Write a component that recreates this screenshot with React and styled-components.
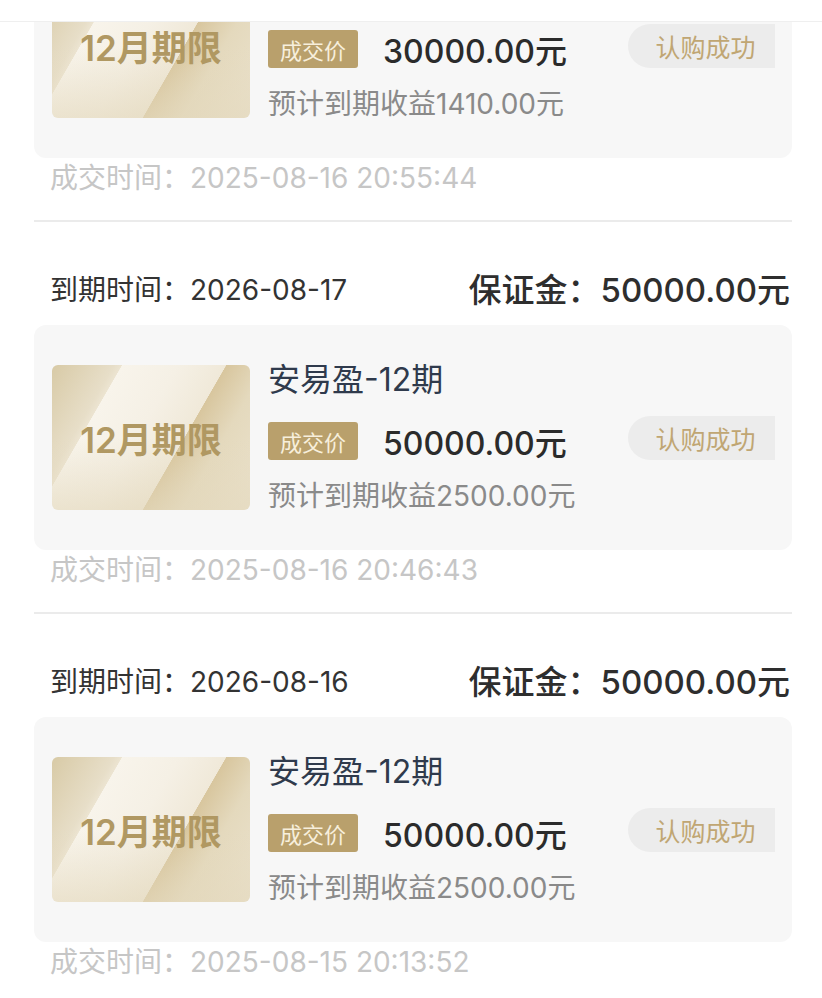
import React from "react";
import styled, { createGlobalStyle } from "styled-components";

const Global = createGlobalStyle`
  html, body { margin: 0; padding: 0; background: #fff; }
  body { font-family: Inter, "Noto Sans CJK SC", sans-serif; }
  * { box-sizing: border-box; }
`;

const Screen = styled.div`
  width: 822px;
  height: 998px;
  overflow: hidden;
  display: flex;
  flex-direction: column;
  background: #fff;
`;

const TopBar = styled.div`
  height: 22px;
  flex: none;
  background: #fff;
  border-bottom: 1px solid #efefef;
  position: relative;
  z-index: 2;
`;

const Viewport = styled.div`
  flex: 1;
  overflow: hidden;
`;

const List = styled.div`
  margin-top: -192px;
  padding: 0 30px 0 34px;
  display: flex;
  flex-direction: column;
`;

const Section = styled.section`
  display: flex;
  flex-direction: column;
  border-bottom: 2px solid #ebebeb;
`;

const HeaderRow = styled.div`
  height: 44px;
  margin: 44px 0 15px;
  padding: 0 2px 0 16px;
  display: flex;
  align-items: center;
  justify-content: space-between;
`;

const Expire = styled.div`
  font-size: 28px;
  color: #333;
`;

const Deposit = styled.div`
  font-size: 33px;
  font-weight: 500;
  color: #2e2e2e;
`;

const Card = styled.div`
  height: 225px;
  border-radius: 12px;
  background: #f7f7f7;
  padding: 40px 17px 40px 18px;
  display: flex;
  align-items: center;
`;

const Thumb = styled.div`
  width: 198px;
  height: 145px;
  flex: none;
  border-radius: 6px;
  display: flex;
  align-items: center;
  justify-content: center;
  font-size: 35px;
  font-weight: 600;
  color: #b09862;
  background:
    linear-gradient(180deg, rgba(255,255,255,0) 50%, rgba(227,216,188,0.6) 100%),
    linear-gradient(120deg,
      #d8caa6 0%,
      #e7dec8 22%,
      #ece4d1 24.8%,
      #f8f4eb 25%,
      #f5f0e5 45%,
      #f0e9d9 61.8%,
      #d8c69e 62%,
      #e4d9bd 76%,
      #ebe2cd 100%);
`;

const Info = styled.div`
  flex: 1;
  margin-left: 18px;
  display: flex;
  flex-direction: column;
  align-self: stretch;
`;

const Title = styled.div`
  font-size: 32px;
  line-height: 30px;
  height: 30px;
  color: #2f3a4c;
  margin-bottom: 24px;
`;

const PriceRow = styled.div`
  height: 44px;
  display: flex;
  align-items: center;
  margin-bottom: 19px;
`;

const Badge = styled.span`
  height: 38px;
  width: 90px;
  border-radius: 3px;
  background: #b9a06c;
  color: #f7efdc;
  font-size: 22px;
  display: flex;
  align-items: center;
  justify-content: center;
  margin-right: 25px;
`;

const Price = styled.span`
  font-size: 32px;
  font-weight: 500;
  color: #2b2b2b;
`;

const Income = styled.div`
  font-size: 28px;
  line-height: 28px;
  color: #8a8a8a;
`;

const Status = styled.div`
  width: 147px;
  height: 44px;
  flex: none;
  border-radius: 22px 0 0 22px;
  background: #ececec;
  color: #c0a673;
  font-size: 25px;
  display: flex;
  align-items: center;
  justify-content: center;
  padding-left: 8px;
`;

const DealTime = styled.div`
  height: 40px;
  line-height: 40px;
  margin-bottom: 22px;
  padding-left: 16px;
  font-size: 28px;
  color: #c6c6c6;
`;

const items = [
  { expire: "2026-08-17", deposit: "30000.00", price: "30000.00", income: "1410.00", time: "2025-08-16 20:55:44" },
  { expire: "2026-08-17", deposit: "50000.00", price: "50000.00", income: "2500.00", time: "2025-08-16 20:46:43" },
  { expire: "2026-08-16", deposit: "50000.00", price: "50000.00", income: "2500.00", time: "2025-08-15 20:13:52" },
];

export default function App() {
  return (
    <>
      <Global />
      <Screen>
        <TopBar />
        <Viewport>
          <List>
            {items.map((it, i) => (
              <Section key={i}>
                <HeaderRow>
                  <Expire>到期时间：{it.expire}</Expire>
                  <Deposit>保证金：{it.deposit}元</Deposit>
                </HeaderRow>
                <Card>
                  <Thumb>12月期限</Thumb>
                  <Info>
                    <Title>安易盈-12期</Title>
                    <PriceRow>
                      <Badge>成交价</Badge>
                      <Price>{it.price}元</Price>
                    </PriceRow>
                    <Income>预计到期收益{it.income}元</Income>
                  </Info>
                  <Status>认购成功</Status>
                </Card>
                <DealTime>成交时间：{it.time}</DealTime>
              </Section>
            ))}
          </List>
        </Viewport>
      </Screen>
    </>
  );
}
